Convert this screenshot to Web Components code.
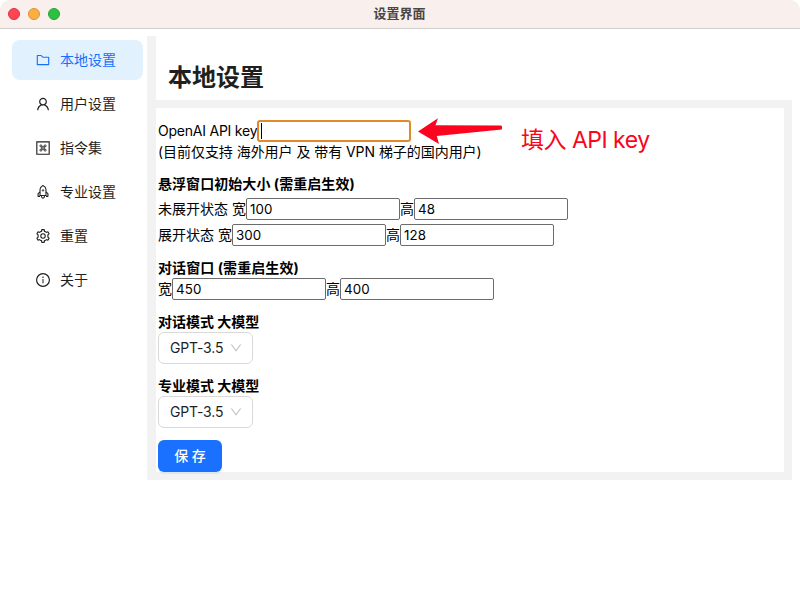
<!DOCTYPE html>
<html lang="zh-CN">
<head>
<meta charset="utf-8">
<title>设置界面</title>
<style>
html,body{margin:0;width:800px;height:600px;overflow:hidden;background:#fff}
body{font-family:Inter,"Noto Sans CJK SC",sans-serif;font-size:14px;color:#000}
</style>
</head>
<body>
<settings-window></settings-window>
<script>
const define = (name, html) => {
  const t = document.createElement('template');
  t.innerHTML = html;
  customElements.define(name, class extends HTMLElement {
    constructor() {
      super();
      this.attachShadow({mode: 'open'}).append(t.content.cloneNode(true));
    }
  });
};

const glyphs = {
  folder: '<path d="M880 298.4H521L403.7 186.2a8.15 8.15 0 00-5.5-2.2H144c-17.7 0-32 14.3-32 32v592c0 17.7 14.3 32 32 32h736c17.7 0 32-14.3 32-32V330.4c0-17.7-14.3-32-32-32zM840 768H184V256h188.5l119.6 114.4H840V768z"/>',
  user: '<path d="M858.5 763.6a374 374 0 00-80.6-119.5 375.63 375.63 0 00-119.5-80.6c-.4-.2-.8-.3-1.2-.5C719.5 518 760 444.7 760 362c0-137-111-248-248-248S264 225 264 362c0 82.7 40.5 156 102.8 201.1-.4.2-.8.3-1.2.5-44.8 18.9-85 46-119.5 80.6a375.63 375.63 0 00-80.6 119.5A371.7 371.7 0 00136 901.8a8 8 0 008 8.2h60c4.4 0 7.9-3.5 8-7.8 2-77.2 33-149.5 87.8-204.3 56.7-56.7 132-87.9 212.2-87.9s155.5 31.2 212.2 87.9C779 752.7 810 825 812 902.2c.1 4.4 3.6 7.8 8 7.8h60a8 8 0 008-8.2c-1-47.8-10.9-94.3-29.5-138.2zM512 534c-45.9 0-89.1-17.9-121.6-50.4S340 407.9 340 362c0-45.9 17.9-89.1 50.4-121.6S466.1 190 512 190s89.1 17.9 121.6 50.4S684 316.1 684 362c0 45.9-17.9 89.1-50.4 121.6S557.9 534 512 534z"/>',
  command: '<g fill="none" stroke="currentColor"><path stroke-width="72" d="M116 116h792v792H116z"/><path stroke-width="56" d="M440 440h144v144H440zM440 440h-64a64 64 0 1164-64zM584 440v-64a64 64 0 1164 64zM584 584h64a64 64 0 11-64 64zM440 584v64a64 64 0 11-64-64z"/></g>',
  rocket: '<g fill="none" stroke="currentColor" stroke-width="68" stroke-linejoin="round"><path d="M322 736V330C322 230 420 145 512 94c92 51 190 136 190 236v406z"/><path d="M322 510L196 615v175h126M702 510l126 105v175H702M404 740c0 92 45 148 108 180 63-32 108-88 108-180"/><circle cx="512" cy="410" r="48" stroke-width="56"/></g>',
  gear: '<path fill-rule="evenodd" d="M924.8 625.7l-65.5-56c3.1-19 4.7-38.4 4.7-57.8s-1.6-38.8-4.7-57.8l65.5-56a32.03 32.03 0 009.3-35.2l-.9-2.6a443.74 443.74 0 00-79.7-137.9l-1.8-2.1a32.12 32.12 0 00-35.1-9.5l-81.3 28.9c-30-24.6-63.5-44-99.7-57.6l-15.7-85a32.05 32.05 0 00-25.8-25.7l-2.7-.5c-52.1-9.4-106.9-9.4-159 0l-2.7.5a32.05 32.05 0 00-25.8 25.7l-15.8 85.4a351.86 351.86 0 00-99 57.4l-81.9-29.1a32 32 0 00-35.1 9.5l-1.8 2.1a446.02 446.02 0 00-79.7 137.9l-.9 2.6c-4.5 12.5-.8 26.5 9.3 35.2l66.3 56.6c-3.1 18.8-4.6 38-4.6 57.1 0 19.2 1.5 38.4 4.6 57.1L99 625.5a32.03 32.03 0 00-9.3 35.2l.9 2.6c18.1 50.4 44.9 96.9 79.7 137.9l1.8 2.1a32.12 32.12 0 0035.1 9.5l81.9-29.1c29.8 24.5 63.1 43.9 99 57.4l15.8 85.4a32.05 32.05 0 0025.8 25.7l2.7.5a449.4 449.4 0 00159 0l2.7-.5a32.05 32.05 0 0025.8-25.7l15.7-85a350 350 0 0099.7-57.6l81.3 28.9a32 32 0 0035.1-9.5l1.8-2.1c34.8-41.1 61.6-87.5 79.7-137.9l.9-2.6c4.5-12.3.8-26.3-9.3-35zM788.3 465.9c2.5 15.1 3.8 30.6 3.8 46.1s-1.3 31-3.8 46.1l-6.6 40.1 74.7 63.9a370.03 370.03 0 01-42.6 73.6L721 702.8l-31.4 25.8c-23.9 19.6-50.5 35-79.3 45.8l-38.1 14.3-17.9 97a377.5 377.5 0 01-85 0l-17.9-97.2-37.8-14.5c-28.5-10.8-55-26.2-78.7-45.7l-31.4-25.9-93.4 33.2c-17-22.9-31.2-47.6-42.6-73.6l75.5-64.5-6.5-40c-2.4-14.9-3.7-30.3-3.7-45.5 0-15.3 1.2-30.6 3.7-45.5l6.5-40-75.5-64.5c11.3-26.1 25.6-50.7 42.6-73.6l93.4 33.2 31.4-25.9c23.7-19.5 50.2-34.9 78.7-45.7l37.9-14.3 17.9-97.2c28.1-3.2 56.8-3.2 85 0l17.9 97 38.1 14.3c28.7 10.8 55.4 26.2 79.3 45.8l31.4 25.8 92.8-32.9c17 22.9 31.2 47.6 42.6 73.6L781.8 426l6.5 39.9z"/><circle cx="512" cy="512" r="142" fill="none" stroke="currentColor" stroke-width="68"/>',
  info: '<circle cx="512" cy="512" r="410" fill="none" stroke="currentColor" stroke-width="76"/><path d="M480 448h64v272h-64z"/><circle cx="512" cy="336" r="48"/>',
  down: '<path d="M884 256h-75c-5.1 0-9.9 2.5-12.9 6.6L512 654.2 227.9 262.6c-3-4.1-7.8-6.6-12.9-6.6h-75c-6.5 0-10.3 7.4-6.5 12.7l352.6 486.1c12.8 17.6 39 17.6 51.7 0l352.6-486.1c3.9-5.3.1-12.7-6.4-12.7z"/>'
};
customElements.define('line-icon', class extends HTMLElement {
  connectedCallback() {
    this.attachShadow({mode: 'open'}).innerHTML =
      `<style>:host{display:block;flex:none;width:14px;height:14px}svg{display:block;width:100%;height:100%}</style>
      <svg viewBox="64 64 896 896" fill="currentColor">${glyphs[this.getAttribute('name')]}</svg>`;
  }
});

define('title-bar', `<style>
:host{display:grid;grid-template-columns:1fr auto 1fr;align-items:center;height:28px;background:#f9efed;border-bottom:1px solid #d0cdcb;border-radius:10px 10px 0 0;box-sizing:content-box}
.lights{display:flex;gap:8px;padding-left:8px}
i{width:12px;height:12px;border-radius:50%;box-sizing:border-box;border:1px solid #e0303e;background:#ff4553}
i:nth-child(2){background:#fdae40;border-color:#d9923a}
i:nth-child(3){background:#2dc042;border-color:#25a337}
b{font-size:13px;line-height:26px;height:28px;padding-right:1px;font-weight:700;color:#4a4644}
</style><div class="lights"><i></i><i></i><i></i></div><b><slot></slot></b>`);

define('nav-item', `<style>
:host{display:flex;align-items:center;gap:10px;height:40px;padding-left:24px;border-radius:8px;color:#1f1f1f;line-height:40px}
:host([active]){background:#e1f2fe;color:#1670ff}
</style><slot name="icon"></slot><span><slot></slot></span>`);

define('text-field', `<style>
:host{display:flex;align-items:center;box-sizing:border-box;width:154px;height:22px;padding-left:3px;border:1px solid #6c6c6c;border-radius:2px;background:#fff;font-size:13.33px;letter-spacing:.1px}
:host([focused]){border:2px solid #e08a2c;border-radius:3px;padding-left:2px}
i{display:none;width:1px;height:16px;background:#000}
:host([focused]) i{display:block}
</style><i></i><slot></slot>`);

define('form-row', `<style>
:host{display:flex;align-items:center;height:22px;white-space:nowrap}
</style><slot></slot>`);
define('row-label', `<style>
:host{display:block;width:var(--w,14px);line-height:22px;font-size:14px}
</style><slot></slot>`);
define('group-title', `<style>
:host{display:block;height:20px;line-height:20px;font-weight:700;font-size:14px;white-space:nowrap;margin-top:12px}
</style><slot></slot>`);
define('select-box', `<style>
:host{display:flex;align-items:center;justify-content:space-between;box-sizing:border-box;width:95px;height:32px;padding:0 10px 0 11px;border:1px solid #d9d9d9;border-radius:6px;color:#1f1f1f}
span{line-height:30px;height:30px;letter-spacing:-.15px}
line-icon{width:12px;height:12px;color:#bfbfbf}
</style><span><slot></slot></span><line-icon name="down"></line-icon>`);
define('primary-button', `<style>
:host{display:flex;justify-content:center;width:64px;height:32px;line-height:31px;margin-top:12px;border-radius:6px;background:#1a70ff;color:#fff;font-weight:500;box-shadow:0 2px 0 rgba(5,145,255,.1)}
</style><slot></slot>`);
define('key-callout', `<style>
:host{position:absolute;left:417px;top:116px;display:flex;gap:18px;color:#fc0420;white-space:nowrap}
svg{display:block}
span{font-size:23px;line-height:32px;margin-top:8px;font-weight:400;letter-spacing:-.45px;word-spacing:-.2px}
</style><svg width="86" height="30" viewBox="0 0 86 30"><path fill="currentColor" d="M1 15.5L21 2.2L18.5 9.3L83 9.6C84.3 9.6 85 10 85 10.8L84.9 13.6L19.8 20L22 28Z"/></svg><span><slot></slot></span>`);

define('settings-window', `<style>
:host{display:flex;flex-direction:column;position:relative;width:800px;height:600px;background:#fff}
.body{display:flex;flex:1}
nav{box-sizing:border-box;width:147px;padding:11px 4px 0 12px;display:flex;flex-direction:column;gap:4px}
main{flex:1;margin-top:7px;height:444px;display:flex}
.rail{width:9px;background:#f2f2f2}
.page{flex:1}
h1{margin:0;height:64px;box-sizing:border-box;padding:26px 0 0 12px;font-size:24px;line-height:32px;font-weight:700;color:#1f1f1f}
.frame{box-sizing:border-box;width:636px;height:380px;padding:8px 8px 8px 0;background:#f2f2f2}
form{box-sizing:border-box;height:364px;padding:12px 0 0 2px;background:#fff}
.note{line-height:20px;height:20px;white-space:nowrap;letter-spacing:-.05px}
.gap{margin-top:4px}
</style>
<title-bar>设置界面</title-bar>
<div class="body">
<nav>
<nav-item active><line-icon slot="icon" name="folder"></line-icon>本地设置</nav-item>
<nav-item><line-icon slot="icon" name="user"></line-icon>用户设置</nav-item>
<nav-item><line-icon slot="icon" name="command"></line-icon>指令集</nav-item>
<nav-item><line-icon slot="icon" name="rocket"></line-icon>专业设置</nav-item>
<nav-item><line-icon slot="icon" name="gear"></line-icon>重置</nav-item>
<nav-item><line-icon slot="icon" name="info"></line-icon>关于</nav-item>
</nav>
<main><div class="rail"></div><div class="page">
<h1>本地设置</h1>
<div class="frame"><form>
<form-row><row-label style="--w:99px;letter-spacing:-.23px">OpenAI API key</row-label><text-field focused></text-field></form-row>
<div class="note">(目前仅支持 海外用户 及 带有 VPN 梯子的国内用户)</div>
<group-title style="letter-spacing:.06px">悬浮窗口初始大小 (需重启生效)</group-title>
<form-row class="gap"><row-label style="--w:88px">未展开状态 宽</row-label><text-field>100</text-field><row-label>高</row-label><text-field>48</text-field></form-row>
<form-row class="gap"><row-label style="--w:74px">展开状态 宽</row-label><text-field>300</text-field><row-label>高</row-label><text-field>128</text-field></form-row>
<group-title style="letter-spacing:.08px">对话窗口 (需重启生效)</group-title>
<form-row><row-label>宽</row-label><text-field>450</text-field><row-label>高</row-label><text-field>400</text-field></form-row>
<group-title>对话模式 大模型</group-title>
<select-box>GPT-3.5</select-box>
<group-title>专业模式 大模型</group-title>
<select-box>GPT-3.5</select-box>
<primary-button>保 存</primary-button>
</form></div>
</div></main>
</div>
<key-callout>填入 API key</key-callout>`);
</script>
</body>
</html>
